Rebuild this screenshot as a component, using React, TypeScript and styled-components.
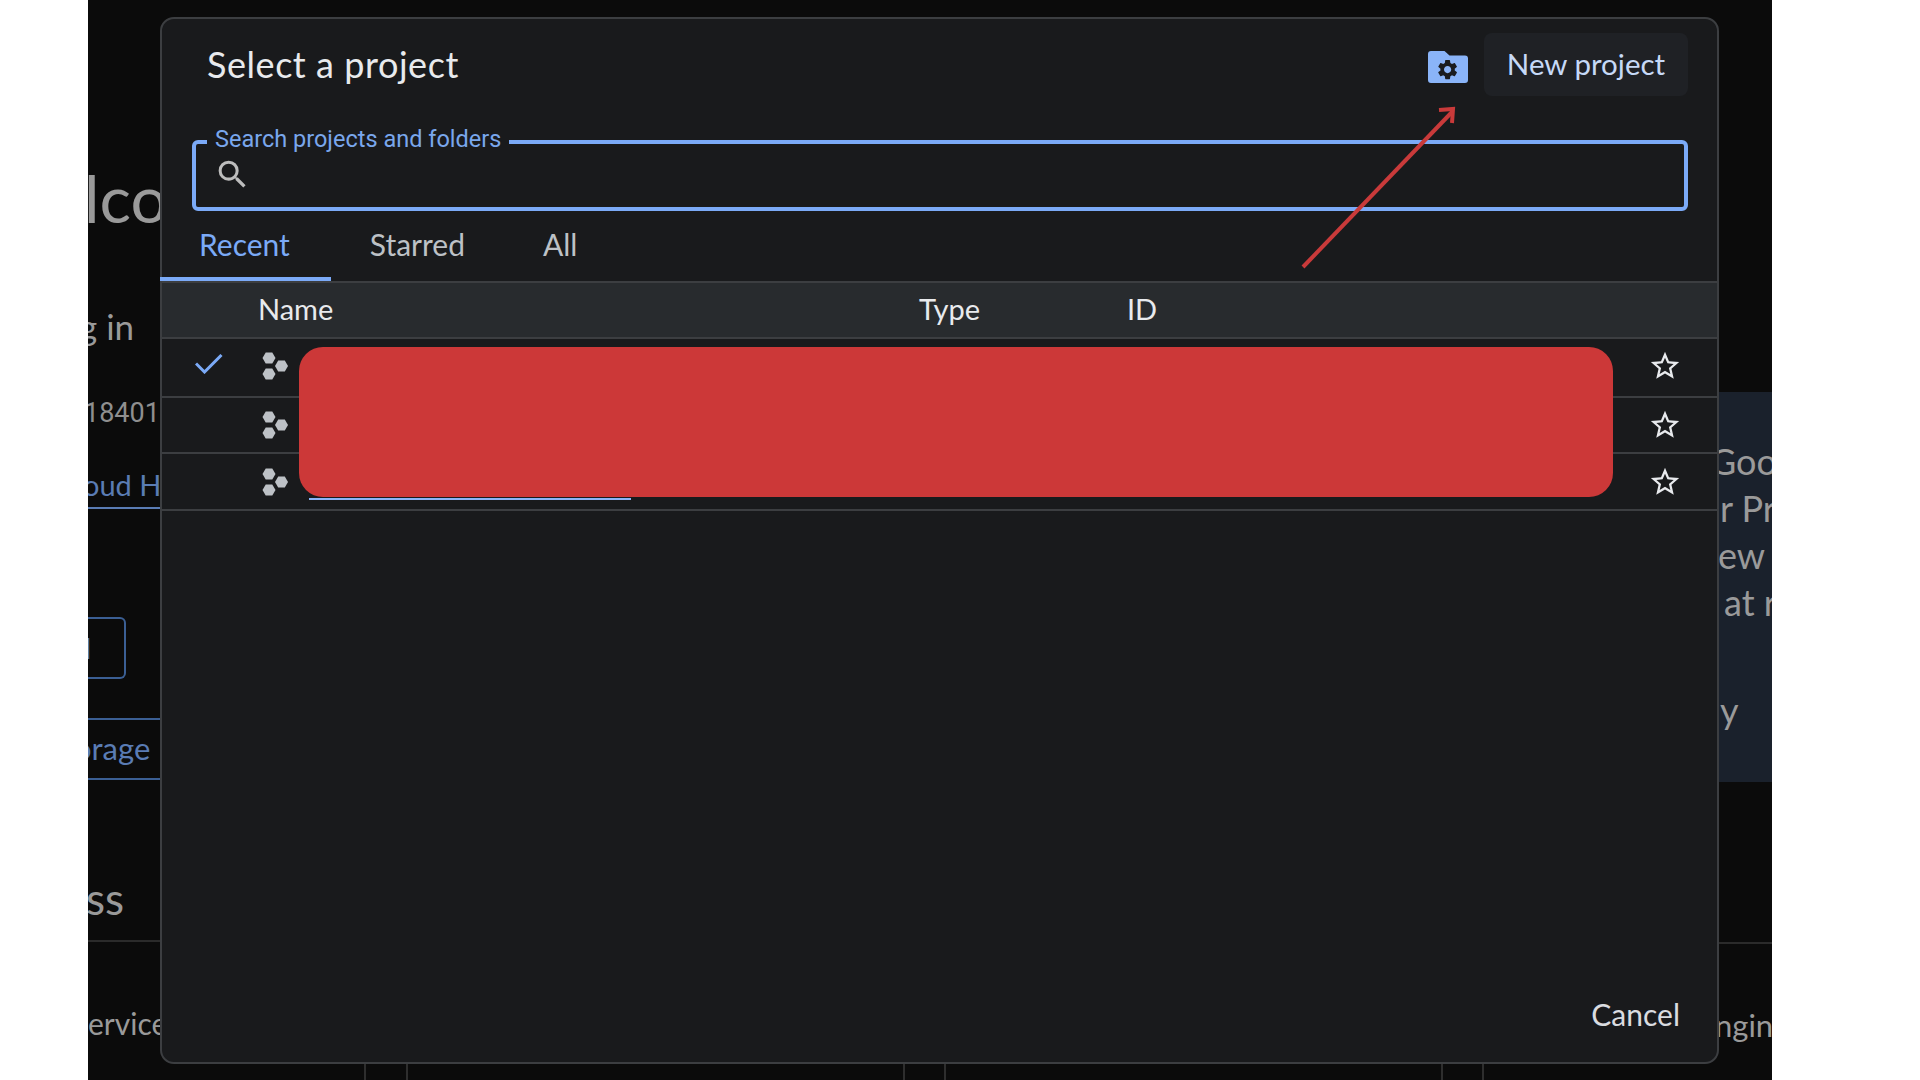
import styled, { createGlobalStyle } from "styled-components";
import { MdSearch, MdStarBorder } from "react-icons/md";

const SANS = `Lato, "Liberation Sans", sans-serif`;
const ROBOTO = `Roboto, "Liberation Sans", sans-serif`;

const GlobalStyle = createGlobalStyle`
  html, body {
    margin: 0;
    padding: 0;
    background: #ffffff;
    overflow: hidden;
  }
`;

const ProjectIcon = () => (
  <svg width="28" height="28" viewBox="0 0 28 28" fill="#bdc1c6">
    <polygon points="1.5,6 4.7,0.4 11.3,0.4 14.5,6 11.3,11.6 4.7,11.6" />
    <polygon points="14,14 17.2,8.4 23.8,8.4 27,14 23.8,19.6 17.2,19.6" />
    <polygon points="1.5,22 4.7,16.4 11.3,16.4 14.5,22 11.3,27.6 4.7,27.6" />
  </svg>
);

const CheckIcon = () => (
  <svg width="28" height="20" viewBox="0 0 28 20" fill="none" stroke="#7baaf7" strokeWidth="3">
    <polyline points="1,9.5 9.5,18 26.5,1" />
  </svg>
);

const FolderGearIcon = () => (
  <svg width="40" height="32" viewBox="0 0 40 32">
    <path
      fill="#8ab4f8"
      d="M3 0h13.5l5 4.5H37a3 3 0 0 1 3 3V29a3 3 0 0 1-3 3H3a3 3 0 0 1-3-3V3a3 3 0 0 1 3-3z"
    />
    <g transform="translate(7.6 6.6)">
      <path
        fill="#1a1c1f"
        d="M19.14 12.94c.04-.3.06-.61.06-.94 0-.32-.02-.64-.07-.94l2.03-1.58a.49.49 0 0 0 .12-.61l-1.92-3.32a.488.488 0 0 0-.59-.22l-2.39.96c-.5-.38-1.03-.7-1.62-.94l-.36-2.54a.484.484 0 0 0-.48-.41h-3.84c-.24 0-.43.17-.47.41l-.36 2.54c-.59.24-1.13.57-1.62.94l-2.39-.96c-.22-.08-.47 0-.59.22L2.74 8.87c-.12.21-.08.47.12.61l2.03 1.58c-.05.3-.09.63-.09.94s.02.64.07.94l-2.03 1.58a.49.49 0 0 0-.12.61l1.92 3.32c.12.22.37.29.59.22l2.39-.96c.5.38 1.03.7 1.62.94l.36 2.54c.05.24.24.41.48.41h3.84c.24 0 .44-.17.47-.41l.36-2.54c.59-.24 1.13-.56 1.62-.94l2.39.96c.22.08.47 0 .59-.22l1.92-3.32c.12-.22.07-.47-.12-.61l-2.01-1.58zM12 15.6c-1.98 0-3.6-1.62-3.6-3.6s1.62-3.6 3.6-3.6 3.6 1.62 3.6 3.6-1.62 3.6-3.6 3.6z"
      />
    </g>
  </svg>
);

const ProjectRow = ({ height, selected, linked }: { height: number; selected?: boolean; linked?: boolean }) => (
  <Row $height={height} $lift={selected ? 4 : 0}>
    <CheckCell>{selected && <CheckIcon />}</CheckCell>
    <IconCell>
      <ProjectIcon />
    </IconCell>
    <NameCell>{linked && <NameLink />}</NameCell>
    <StarCell>
      <MdStarBorder size={34} />
    </StarCell>
  </Row>
);

const Backdrop = () => (
  <>
    <LeftStrip>
      <Hero>lcome</Hero>
      <Subtitle>g in</Subtitle>
      <Num>18401</Num>
      <HubTab>oud Hub</HubTab>
      <OutlineButton>
        <span>l</span>
      </OutlineButton>
      <StorageBand>orage B</StorageBand>
      <SectionTitle>ss</SectionTitle>
      <Rule />
      <ServiceText>ervices</ServiceText>
    </LeftStrip>
    <MiddleStrip>
      <Tick $left={203} />
      <Tick $left={40} />
      <Tick $left={495} />
      <Tick $left={39} />
      <Tick $left={495} />
      <Tick $left={39} />
    </MiddleStrip>
    <RightStrip>
      <PromoPanel>
        <PromoLine $indent={-8}>Goo</PromoLine>
        <PromoLine $indent={2}>r Pr</PromoLine>
        <PromoLine $indent={0}>ew</PromoLine>
        <PromoLine $indent={6}>at r</PromoLine>
        <PromoGap />
        <PromoLine $indent={2}>y</PromoLine>
      </PromoPanel>
      <RightRule />
      <EngineText>ngin</EngineText>
    </RightStrip>
  </>
);

const ProjectDialog = () => (
  <Dialog>
    <DialogHeader>
      <DialogTitle>Select a project</DialogTitle>
      <HeaderActions>
        <FolderGearIcon />
        <NewProjectButton>New project</NewProjectButton>
      </HeaderActions>
    </DialogHeader>

    <SearchField>
      <SearchLegend>Search projects and folders</SearchLegend>
      <SearchIconWrap>
        <MdSearch size={37} />
      </SearchIconWrap>
    </SearchField>

    <Tabs>
      <Tab $active>Recent</Tab>
      <Tab>Starred</Tab>
      <Tab>All</Tab>
    </Tabs>

    <TableHead>
      <HeadName>Name</HeadName>
      <HeadType>Type</HeadType>
      <HeadId>ID</HeadId>
    </TableHead>
    <ProjectRow height={59} selected />
    <ProjectRow height={56} />
    <ProjectRow height={57} linked />

    <DialogFooter>
      <CancelButton>Cancel</CancelButton>
    </DialogFooter>

    <Redaction />
    <ArrowOverlay width="170" height="170" viewBox="0 0 170 170" fill="none" stroke="#c93a3a" strokeWidth="4">
      <line x1="6" y1="164" x2="155" y2="9" />
      <polyline points="142,7 156,6 155,20" />
    </ArrowOverlay>
  </Dialog>
);

export default function App() {
  return (
    <>
      <GlobalStyle />
      <Screen>
        <Backdrop />
        <ProjectDialog />
      </Screen>
    </>
  );
}

const Screen = styled.div`
  position: relative;
  display: flex;
  width: 1684px;
  height: 1080px;
  margin-left: 88px;
  overflow: hidden;
  background: #0b0b0b;
  font-family: ${SANS};
`;

const LeftStrip = styled.div`
  flex: 0 0 73px;
  display: flex;
  flex-direction: column;
  overflow: hidden;
  padding-top: 163px;
  color: #9a9a9a;
  white-space: nowrap;
`;
const Hero = styled.div`
  height: 70px;
  margin-left: -4px;
  font-size: 66px;
  line-height: 70px;
`;
const Subtitle = styled.div`
  height: 40px;
  margin: 73px 0 0 -9px;
  font-size: 35px;
  line-height: 40px;
`;
const Num = styled.div`
  height: 30px;
  margin: 52px 0 0 -4px;
  font-family: ${ROBOTO};
  font-size: 27px;
  line-height: 30px;
  color: #8f8f8f;
`;
const HubTab = styled.div`
  height: 41px;
  margin: 38px 0 0 -5px;
  border-bottom: 2px solid #5a7cb4;
  font-size: 29px;
  line-height: 38px;
  color: #5a7cb4;
`;
const OutlineButton = styled.div`
  box-sizing: border-box;
  width: 38px;
  height: 62px;
  margin-top: 108px;
  display: flex;
  align-items: center;
  border: 2px solid #3b5f94;
  border-left: 0;
  border-radius: 0 6px 6px 0;
  span {
    margin-left: -4px;
    font-size: 28px;
    font-weight: 700;
    color: #5a7cb4;
  }
`;
const StorageBand = styled.div`
  box-sizing: border-box;
  height: 62px;
  margin-top: 39px;
  margin-left: -14px;
  border-top: 2px solid #3b5f94;
  border-bottom: 2px solid #3b5f94;
  font-size: 31px;
  line-height: 56px;
  color: #5a7cb4;
`;
const SectionTitle = styled.div`
  height: 50px;
  margin: 93px 0 0 -2px;
  font-size: 44px;
  line-height: 50px;
`;
const Rule = styled.div`
  height: 2px;
  margin-top: 17px;
  background: #2b2b2b;
`;
const ServiceText = styled.div`
  height: 36px;
  margin-top: 63px;
  font-size: 30px;
  line-height: 36px;
`;

const MiddleStrip = styled.div`
  flex: 1;
  display: flex;
  align-items: flex-end;
`;
const Tick = styled.div<{ $left: number }>`
  width: 2px;
  height: 16px;
  margin-left: ${(p) => p.$left}px;
  background: #2e2e2e;
`;

const RightStrip = styled.div`
  flex: 0 0 54px;
  display: flex;
  flex-direction: column;
  overflow: hidden;
  padding-top: 392px;
  color: #9a9a9a;
  white-space: nowrap;
`;
const PromoPanel = styled.div`
  box-sizing: border-box;
  height: 390px;
  padding-top: 46px;
  background: #1a212c;
`;
const PromoLine = styled.div<{ $indent: number }>`
  height: 47px;
  margin-left: ${(p) => p.$indent}px;
  font-size: 36px;
  line-height: 47px;
`;
const PromoGap = styled.div`
  height: 61px;
`;
const RightRule = styled.div`
  height: 2px;
  margin-top: 160px;
  background: #2b2b2b;
`;
const EngineText = styled.div`
  height: 36px;
  margin: 63px 0 0 -3px;
  font-size: 31px;
  line-height: 36px;
`;

const Dialog = styled.div`
  position: absolute;
  left: 72px;
  top: 17px;
  box-sizing: border-box;
  width: 1559px;
  height: 1047px;
  display: flex;
  flex-direction: column;
  background: #191a1c;
  border: 2px solid #3c3e41;
  border-radius: 14px;
`;
const DialogHeader = styled.div`
  display: flex;
  align-items: center;
  justify-content: space-between;
  height: 63px;
  margin-top: 14px;
  padding: 0 29px 0 45px;
`;
const DialogTitle = styled.div`
  margin-bottom: 2px;
  font-size: 36px;
  letter-spacing: 0.55px;
  color: #e8eaed;
`;
const HeaderActions = styled.div`
  display: flex;
  align-items: center;
  gap: 16px;
  svg {
    margin-top: 4px;
  }
`;
const NewProjectButton = styled.div`
  box-sizing: border-box;
  display: flex;
  align-items: center;
  justify-content: center;
  width: 204px;
  height: 63px;
  padding-bottom: 2px;
  border-radius: 8px;
  background: #1f2125;
  font-size: 29.5px;
  color: #c6d9f7;
`;
const SearchField = styled.fieldset`
  box-sizing: border-box;
  height: 85px;
  margin: 30px 29px 0 30px;
  padding: 0 0 0 11px;
  border: 4px solid #7baaf7;
  border-radius: 6px;
  min-width: 0;
`;
const SearchLegend = styled.legend`
  margin-left: 0;
  padding: 0 8px 6px;
  font-family: ${ROBOTO};
  font-size: 23.5px;
  line-height: 26px;
  color: #7aa7ec;
`;
const SearchIconWrap = styled.div`
  display: flex;
  height: 32px;
  align-items: center;
  padding-left: 7px;
  color: #bdbdbd;
`;
const Tabs = styled.div`
  display: flex;
  height: 70px;
  margin-left: -2px;
`;
const Tab = styled.div<{ $active?: boolean }>`
  box-sizing: border-box;
  display: flex;
  align-items: center;
  height: 70px;
  padding: 0 ${(p) => (p.$active ? 41 : 39)}px 0 39px;
  border-bottom: 4px solid ${(p) => (p.$active ? "#7baaf7" : "transparent")};
  font-size: 30px;
  color: ${(p) => (p.$active ? "#7baaf7" : "#bdc1c6")};
`;
const TableHead = styled.div`
  box-sizing: border-box;
  display: flex;
  align-items: center;
  height: 58px;
  padding-bottom: 3px;
  background: #282b2e;
  border-top: 2px solid #3c3e41;
  border-bottom: 2px solid #3c3e41;
  font-size: 29px;
  color: #e8eaed;
`;
const HeadName = styled.div`
  box-sizing: border-box;
  width: 757px;
  padding-left: 96px;
`;
const HeadType = styled.div`
  width: 208px;
`;
const HeadId = styled.div``;

const Row = styled.div<{ $height: number; $lift: number }>`
  box-sizing: border-box;
  display: flex;
  align-items: center;
  height: ${(p) => p.$height}px;
  padding-bottom: ${(p) => p.$lift}px;
  border-bottom: 2px solid #3c3e41;
`;
const CheckCell = styled.div`
  display: flex;
  justify-content: center;
  width: 93px;
  margin-bottom: 4px;
`;
const IconCell = styled.div`
  box-sizing: border-box;
  display: flex;
  width: 48px;
  padding-left: 6px;
`;
const NameCell = styled.div`
  flex: 1;
  align-self: stretch;
  display: flex;
  align-items: flex-end;
  padding: 0 0 9px 6px;
`;
const NameLink = styled.div`
  width: 322px;
  height: 2px;
  background: #8ab4f8;
`;
const StarCell = styled.div`
  box-sizing: border-box;
  display: flex;
  justify-content: center;
  width: 90px;
  padding-right: 14px;
  color: #e8eaed;
`;
const DialogFooter = styled.div`
  margin-top: auto;
  display: flex;
  justify-content: flex-end;
  padding: 0 37px 28px 0;
`;
const CancelButton = styled.div`
  font-size: 30px;
  line-height: 40px;
  color: #dadce0;
`;
const Redaction = styled.div`
  position: absolute;
  left: 137px;
  top: 328px;
  width: 1314px;
  height: 150px;
  border-radius: 24px;
  background: #cc3838;
`;
const ArrowOverlay = styled.svg`
  position: absolute;
  left: 1135px;
  top: 84px;
`;
